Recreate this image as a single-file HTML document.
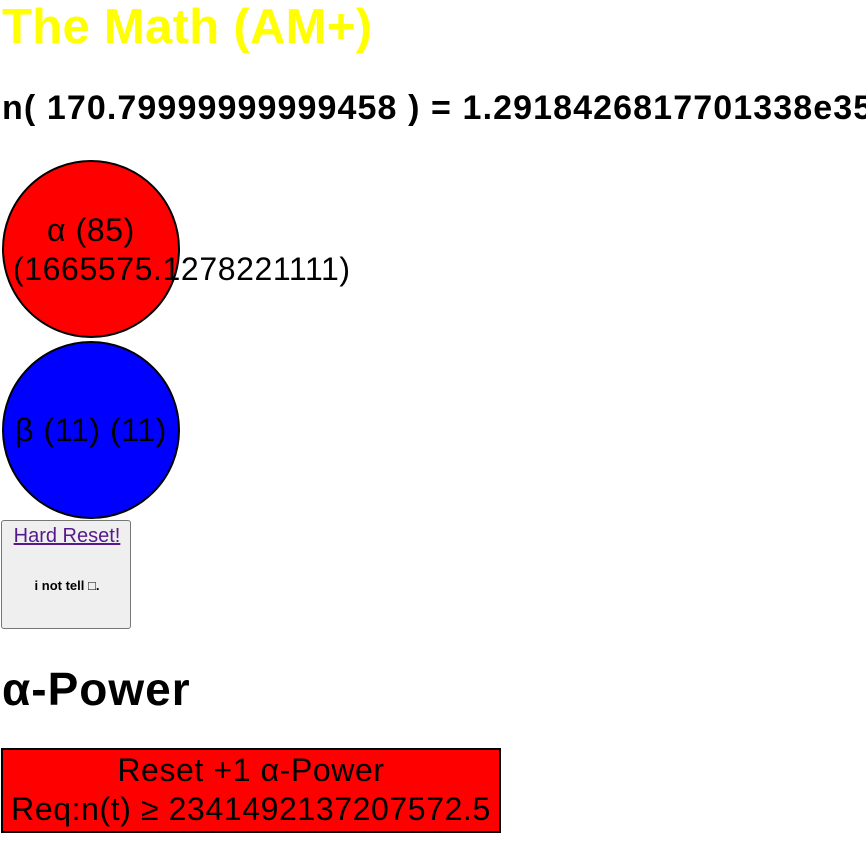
<!DOCTYPE html>
<html><head><meta charset="utf-8"><style>
body{margin:0;background:#fff;font-family:"Liberation Sans",Arial,sans-serif;width:866px;height:852px;overflow:hidden;position:relative}
.a{position:absolute;white-space:nowrap}
.c{position:absolute;left:2px;width:174px;height:174px;border:2px solid #000;border-radius:50%}
</style></head><body>
<div class="a" style="left:2px;top:-3px;font-size:49px;font-weight:bold;color:#ffff00;line-height:60px;letter-spacing:0.3px">The Math (AM+)</div>
<div class="a" style="left:2px;top:87px;font-size:34px;font-weight:bold;line-height:42px;letter-spacing:1.1px">n( 170.79999999999458 ) = 1.2918426817701338e35</div>
<div class="c" style="top:160px;background:#ff0000"></div>
<div class="a" style="left:0;width:182px;text-align:center;top:211px;font-size:32px;line-height:38px;letter-spacing:0.6px">α (85)</div>
<div class="a" style="left:13px;top:250px;font-size:32px;line-height:38px;letter-spacing:0.6px">(1665575.1278221111)</div>
<div class="c" style="top:341px;background:#0000ff"></div>
<div class="a" style="left:0;width:182px;text-align:center;top:411px;font-size:32px;line-height:38px;letter-spacing:0.6px">β (11) (11)</div>
<div class="a" style="left:1px;top:520px;width:128px;height:107px;background:#efefef;border:1px solid #767676;border-radius:3px"></div>
<div class="a" style="left:2px;width:130px;text-align:center;top:523px;font-size:20px;line-height:26px;color:#551a8b;text-decoration:underline">Hard Reset!</div>
<div class="a" style="left:2px;width:130px;text-align:center;top:578px;font-size:13px;font-weight:bold;line-height:16px">i not tell □.</div>
<div class="a" style="left:2px;top:662px;font-size:46px;font-weight:bold;line-height:54px;letter-spacing:1px">α-Power</div>
<div class="a" style="left:1px;top:748px;width:496px;height:81px;background:#ff0000;border:2px solid #000"></div>
<div class="a" style="left:1px;width:500px;text-align:center;top:751px;font-size:32px;line-height:39px;letter-spacing:0.6px">Reset +1 α-Power<br>Req:n(t) ≥ 2341492137207572.5</div>
</body></html>
